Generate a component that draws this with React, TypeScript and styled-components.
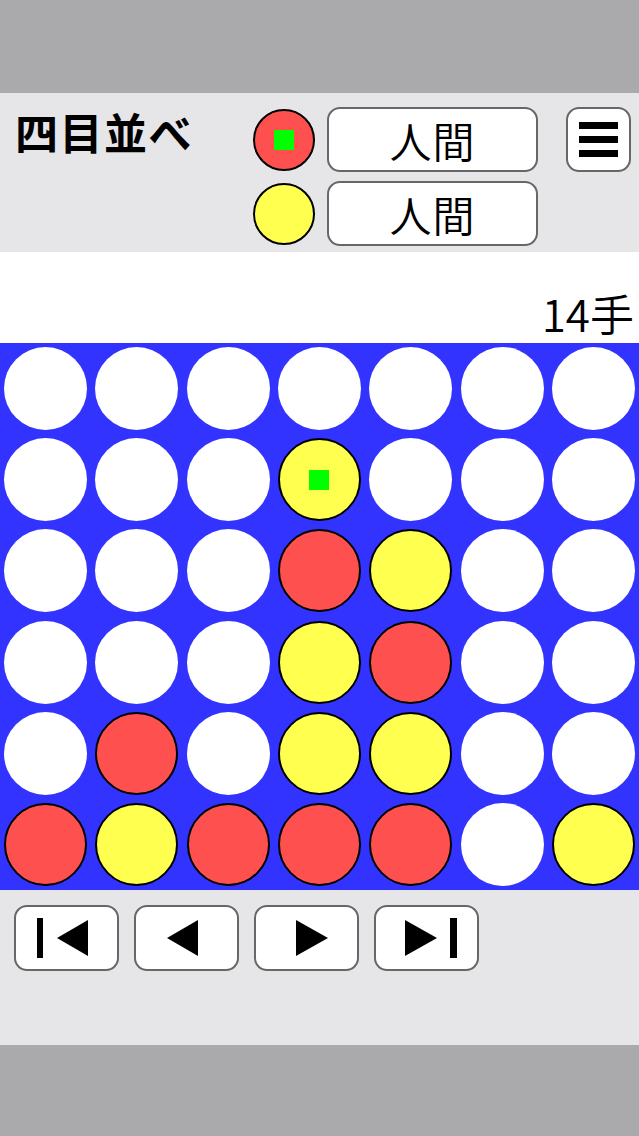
import React from "react";
import styled, { createGlobalStyle } from "styled-components";

type Piece = "" | "R" | "Y";

const GlobalStyle = createGlobalStyle`
    html, body {
        margin: 0;
        padding: 0;
        background: #aaa9ab;
        font-family: "Noto Sans CJK JP", "Noto Sans", sans-serif;
    }
`;

const Screen = styled.div`
    width: 639px;
    height: 1136px;
    display: flex;
    flex-direction: column;
    background: #aaa9ab;
`;

const Band = styled.div<{ $height: number }>`
    height: ${(p) => p.$height}px;
    flex: none;
    background: #aaa9ab;
`;

const Header = styled.header`
    flex: none;
    background: #e6e5e7;
    display: grid;
    grid-template-columns: 226px 62px 211px 81px;
    grid-template-rows: 65px 65px;
    column-gap: 12px;
    row-gap: 9px;
    padding: 14px 0 6px 15px;
`;

const Title = styled.h1`
    grid-row: 1;
    grid-column: 1;
    margin: 0;
    font-size: 43px;
    font-weight: 700;
    line-height: 1;
    color: #000;
    padding-top: 3px;
    letter-spacing: 1.5px;
`;

const Disc = styled.div<{ $color: string; $size: number }>`
    width: ${(p) => p.$size}px;
    height: ${(p) => p.$size}px;
    border-radius: 50%;
    background: ${(p) => p.$color};
    border: ${(p) => (p.$color === "#fff" ? "none" : "2px solid #000")};
    box-sizing: border-box;
    display: flex;
    align-items: center;
    justify-content: center;
    align-self: center;
    justify-self: center;
`;

const Marker = styled.div<{ $size: number }>`
    width: ${(p) => p.$size}px;
    height: ${(p) => p.$size}px;
    background: #00ff00;
`;

const RoundButton = styled.button`
    box-sizing: border-box;
    background: #fff;
    border: 2px solid #676767;
    border-radius: 13px;
    padding: 0;
    display: flex;
    align-items: center;
    justify-content: center;
    font-family: inherit;
    color: #000;
    cursor: pointer;
`;

const PlayerButton = styled(RoundButton)`
    font-size: 42px;
    font-weight: 350;
    line-height: 1;
    letter-spacing: 1px;
`;

const MenuButton = styled(RoundButton)`
    flex-direction: column;
    gap: 7px;
    width: 65px;
    justify-self: end;
`;

const MenuLine = styled.span`
    display: block;
    width: 39px;
    height: 7px;
    background: #000;
`;

const MoveBar = styled.div`
    flex: none;
    height: 91px;
    background: #fff;
    display: flex;
    align-items: flex-end;
    justify-content: flex-end;
    padding: 0 5px 3px 0;
    box-sizing: border-box;
    font-size: 44px;
    font-weight: 350;
    line-height: 1.2;
    color: #000;
`;

const Board = styled.div`
    flex: none;
    height: 547px;
    background: #3333ff;
    display: grid;
    grid-template-columns: repeat(7, 1fr);
    grid-template-rows: repeat(6, 1fr);
`;

const Cell = styled.div`
    display: flex;
    align-items: center;
    justify-content: center;
`;

const Controls = styled.div`
    flex: none;
    height: 155px;
    background: #e6e5e7;
    display: flex;
    align-items: flex-start;
    gap: 15px;
    padding: 15px 0 0 14px;
    box-sizing: border-box;
`;

const NavButton = styled(RoundButton)`
    width: 105px;
    height: 66px;
`;

const rows: Piece[][] = [
    ["", "", "", "", "", "", ""],
    ["", "", "", "Y", "", "", ""],
    ["", "", "", "R", "Y", "", ""],
    ["", "", "", "Y", "R", "", ""],
    ["", "R", "", "Y", "Y", "", ""],
    ["R", "Y", "R", "R", "R", "", "Y"],
];

const colorOf = (p: Piece) => (p === "R" ? "#ff5050" : p === "Y" ? "#ffff50" : "#fff");

function NavIcon({ kind }: { kind: "first" | "prev" | "next" | "last" }) {
    return (
        <svg width="101" height="42" viewBox="0 0 101 42">
            {kind === "first" && (
                <>
                    <rect x="21" y="1" width="6" height="40" fill="#000" />
                    <polygon points="41,21 72,3 72,39" fill="#000" />
                </>
            )}
            {kind === "prev" && <polygon points="31,21 62,3 62,39" fill="#000" />}
            {kind === "next" && <polygon points="40,3 40,39 72,21" fill="#000" />}
            {kind === "last" && (
                <>
                    <polygon points="29,3 29,39 61,21" fill="#000" />
                    <rect x="74" y="1" width="7" height="40" fill="#000" />
                </>
            )}
        </svg>
    );
}

export default function App() {
    return (
        <Screen>
            <GlobalStyle />
            <Band $height={93} />
            <Header>
                <Title>四目並べ</Title>
                <Disc $color="#ff5050" $size={62} style={{ gridRow: 1, gridColumn: 2 }}>
                    <Marker $size={20} />
                </Disc>
                <PlayerButton style={{ gridRow: 1, gridColumn: 3 }}>人間</PlayerButton>
                <MenuButton style={{ gridRow: 1, gridColumn: 4 }}>
                    <MenuLine />
                    <MenuLine />
                    <MenuLine />
                </MenuButton>
                <Disc $color="#ffff50" $size={62} style={{ gridRow: 2, gridColumn: 2 }} />
                <PlayerButton style={{ gridRow: 2, gridColumn: 3 }}>人間</PlayerButton>
            </Header>
            <MoveBar>14手</MoveBar>
            <Board>
                {rows.map((row, r) =>
                    row.map((p, c) => (
                        <Cell key={`${r}-${c}`}>
                            <Disc $color={colorOf(p)} $size={83}>
                                {r === 1 && c === 3 && <Marker $size={20} />}
                            </Disc>
                        </Cell>
                    ))
                )}
            </Board>
            <Controls>
                <NavButton><NavIcon kind="first" /></NavButton>
                <NavButton><NavIcon kind="prev" /></NavButton>
                <NavButton><NavIcon kind="next" /></NavButton>
                <NavButton><NavIcon kind="last" /></NavButton>
            </Controls>
            <Band $height={91} />
        </Screen>
    );
}
